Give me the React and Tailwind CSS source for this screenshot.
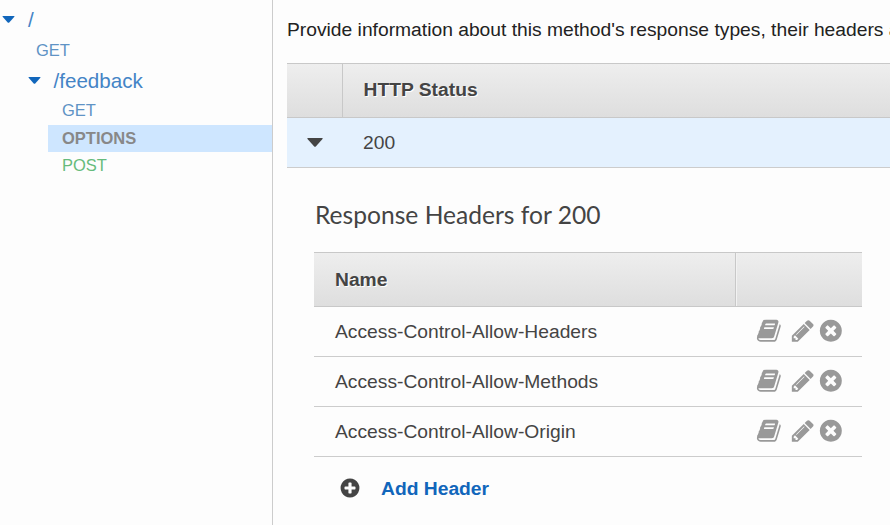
import React from "react";

const CIRCLE =
  "m387-226q0 209-103 385.5t-279.5 279.5-385.5 103-385.5-103-279.5-279.5-103-385.5 103-385.5 279.5-279.5 385.5-103 385.5 103 279.5 279.5 103 385.5z";

const PATHS = {
  book: "M1703 478q40 57 18 129l-275 906q-19 64-76.5 107.5t-122.5 43.5h-923q-77 0-148.5-53.5t-99.5-131.5q-24-67-2-127 0-4 3-27t4-37q1-8-3-21.5t-3-19.5q2-11 8-21t16.5-23.5 16.5-23.5q23-38 45-91.5t30-91.5q3-10 .5-30t-.5-28q3-11 17-28t17-23q21-36 42-92t25-90q1-9-2.5-32t.5-28q4-13 22-30.5t22-22.5q19-26 42.5-84.5t27.5-96.5q1-8-3-25.5t-2-26.5q2-8 9-18t18-23 17-21q8-12 16.5-30.5t15-35 16-36 19.5-32 26.5-23.5 36-11.5 47.5 5.5l-1 3q38-9 51-9h761q74 0 114 56t18 130l-274 906q-36 119-71.5 153.5t-128.5 34.5h-869q-27 0-38 15-11 16-1 43 24 70 144 70h923q29 0 56-15.5t35-41.5l300-987q7-22 5-57 38 15 59 43zm-1064 2q-4 13 2 22.5t20 9.5h608q13 0 25.5-9.5t16.5-22.5l21-64q4-13-2-22.5t-20-9.5h-608q-13 0-25.5 9.5t-16.5 22.5zm-83 256q-4 13 2 22.5t20 9.5h608q13 0 25.5-9.5t16.5-22.5l21-64q4-13-2-22.5t-20-9.5h-608q-13 0-25.5 9.5t-16.5 22.5z",
  pencil:
    "M491 1536l91-91-235-235-91 91v107h128v128h107zm523-928q0-22-22-22-10 0-17 7l-542 542q-7 7-7 17 0 22 22 22 10 0 17-7l542-542q7-7 7-17zm-54-192l416 416-832 832h-416v-416zm683 96q0 53-37 90l-166 166-416-416 166-165q36-38 90-38 53 0 91 38l235 234q37 39 37 91z",
  remove:
    "M1277 1122q0-26-19-45l-181-181 181-181q19-19 19-45 0-27-19-46l-90-90q-19-19-46-19-26 0-45 19l-181 181-181-181q-19-19-45-19-27 0-46 19l-90 90q-19 19-19 46 0 26 19 45l181 181-181 181q-19 19-19 45 0 27 19 46l90 90q19 19 46 19 26 0 45-19l181-181 181 181q19 19 45 19 27 0 46-19l90-90q19-19 19-46z" +
    CIRCLE,
  add:
    "M1344 960v-128q0-26-19-45t-45-19h-256v-256q0-26-19-45t-45-19h-128q-26 0-45 19t-19 45v256h-256q-26 0-45 19t-19 45v128q0 26 19 45t45 19h256v256q0 26 19 45t45 19h128q26 0 45-19t19-45v-256h256q26 0 45-19t19-45zm320-64q0 209-103 385.5t-279.5 279.5-385.5 103-385.5-103-279.5-279.5-103-385.5 103-385.5 279.5-279.5 385.5-103 385.5 103 279.5 279.5 103 385.5z",
};

function Icon({ name, className }) {
  return (
    <svg viewBox="0 0 1792 1792" fill="currentColor" className={`shrink-0 ${className}`}>
      <path d={PATHS[name]} />
    </svg>
  );
}

function Caret({ className }) {
  return (
    <svg viewBox="0 0 16 9" fill="currentColor" className={`shrink-0 ${className}`}>
      <path d="M1 0H15Q16.3 0 15.5 1L9 8.2Q8 9.2 7 8.2L0.5 1Q-0.3 0 1 0Z" />
    </svg>
  );
}

function Sidebar() {
  return (
    <nav className="w-[273px] shrink-0 border-r border-[#ccc] text-[16.5px] text-[#5f93c5]">
      <div className="flex h-[39px] items-center pl-[2px] text-[20.6px] text-[#4484c6]">
        <Caret className="h-[7px] w-[13px] text-[#1166bb]" />
        <span className="ml-[13px] pt-px">/</span>
      </div>
      <div className="flex h-[23px] items-center pl-[36px]">GET</div>
      <div className="flex h-[35px] items-center pl-[28px] text-[20.6px] text-[#4484c6]">
        <Caret className="mt-[2px] h-[7px] w-[13px] text-[#1166bb]" />
        <span className="ml-[12.5px] pt-[4px]">/feedback</span>
      </div>
      <div className="ml-12 flex h-7 items-center pb-[2px] pl-[14px]">GET</div>
      <div className="ml-12 flex h-[27px] items-center bg-[#cee6ff] pl-[14px] font-bold text-[#888]">
        OPTIONS
      </div>
      <div className="ml-12 flex h-[27px] items-center pl-[14px] text-[#66bb7c]">POST</div>
    </nav>
  );
}

const HEAD =
  "flex h-[55px] border-y border-[#c8c8c8] bg-linear-to-b from-[#eee] to-[#dedede] font-bold [text-shadow:1px_1px_0_#fff]";

const HEADERS = [
  "Access-Control-Allow-Headers",
  "Access-Control-Allow-Methods",
  "Access-Control-Allow-Origin",
];

function ResponseHeaders() {
  return (
    <section className="ml-[27px] w-[548px]">
      <h2 className="mt-[29px] h-[55px] pl-px font-[Lato,sans-serif] text-[24.6px] leading-9">
        Response Headers for 200
      </h2>
      <div className={HEAD}>
        <div className="flex w-[422px] items-center border-r border-[#c8c8c8] pt-[2px] pl-[21px]">Name</div>
        <div className="flex-1 border-l border-[#f2f2f2]" />
      </div>
      {HEADERS.map((name) => (
        <div key={name} className="flex h-[50px] items-center border-b border-[#ccc] pl-[21px]">
          <span className="flex-1 pt-[2px]">{name}</span>
          <div className="flex items-center pr-[18px] pb-px text-[#999]">
            <Icon name="book" className="size-[25.67px]" />
            <Icon name="pencil" className="ml-[8.6px] size-[25.67px]" />
            <Icon name="remove" className="ml-[2.3px] size-[25.67px]" />
          </div>
        </div>
      ))}
      <div className="flex h-[63px] items-center pl-[25px]">
        <Icon name="add" className="mb-px size-[22px]" />
        <span className="ml-5 pt-[2px] font-bold text-[#1166bb]">Add Header</span>
      </div>
    </section>
  );
}

export default function App() {
  return (
    <div className="flex h-[525px] w-[890px] overflow-hidden bg-[#fdfdfd] font-['Liberation_Sans',Arial,sans-serif] text-[19.25px] text-[#444]">
      <Sidebar />
      <main className="w-[617px] shrink-0 overflow-hidden pl-[14px]">
        <p className="h-[63px] pt-[15px] leading-[29px] whitespace-nowrap text-[#222]">
          Provide information about this method's response types, their headers and
        </p>
        <div className={HEAD}>
          <div className="w-[56px] border-r border-[#c8c8c8]" />
          <div className="flex items-center pl-[20.5px]">HTTP Status</div>
        </div>
        <div className="flex h-[50px] items-center border-b border-[#ccc] bg-[#e4f1fe] pl-[20px]">
          <Caret className="h-[9px] w-4" />
          <span className="ml-10 pt-[2px]">200</span>
        </div>
        <ResponseHeaders />
      </main>
    </div>
  );
}
